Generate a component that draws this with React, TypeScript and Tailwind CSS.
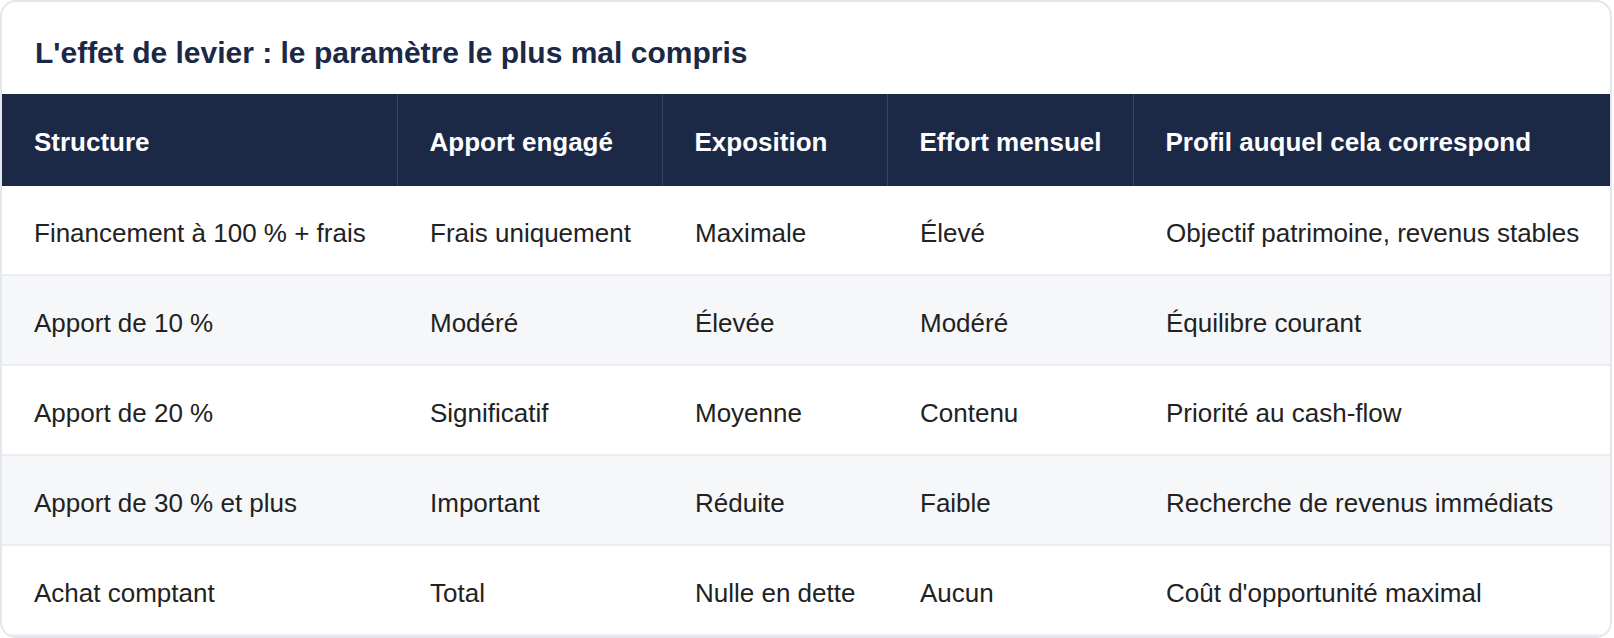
import React from "react";

const rows: string[][] = [
  ["Financement à 100 % + frais", "Frais uniquement", "Maximale", "Élevé", "Objectif patrimoine, revenus stables"],
  ["Apport de 10 %", "Modéré", "Élevée", "Modéré", "Équilibre courant"],
  ["Apport de 20 %", "Significatif", "Moyenne", "Contenu", "Priorité au cash-flow"],
  ["Apport de 30 % et plus", "Important", "Réduite", "Faible", "Recherche de revenus immédiats"],
  ["Achat comptant", "Total", "Nulle en dette", "Aucun", "Coût d'opportunité maximal"],
];

const headers = ["Structure", "Apport engagé", "Exposition", "Effort mensuel", "Profil auquel cela correspond"];

export default function App() {
  return (
    <div
      className="w-[1614px] h-[638px] bg-white"
      style={{ fontFamily: '"Liberation Sans", Arial, Helvetica, sans-serif' }}
    >
      <div className="w-[1612px] h-[638px] border-2 border-[#e3e6ea] rounded-[16px] overflow-hidden bg-white">
        <h2 className="pl-[33px] pt-[33px] pb-[23px] text-[30px] leading-[36px] font-bold text-[#1b2846]">
          L'effet de levier : le paramètre le plus mal compris
        </h2>
        <table className="w-[1608px] table-fixed border-collapse">
          <colgroup>
            <col className="w-[395px]" />
            <col className="w-[265px]" />
            <col className="w-[225px]" />
            <col className="w-[246px]" />
            <col className="w-[477px]" />
          </colgroup>
          <thead>
            <tr className="bg-[#1b2846]">
              {headers.map((h, i) => (
                <th
                  key={h}
                  className={`text-left font-bold text-white text-[26px] leading-[40px] pt-[28px] pb-[24px] pl-[32px] pr-0 whitespace-nowrap ${
                    i > 0 ? "border-l border-[#3a4562]" : ""
                  }`}
                >
                  {h}
                </th>
              ))}
            </tr>
          </thead>
          <tbody>
            {rows.map((r, ri) => (
              <tr
                key={ri}
                className={`${ri % 2 === 1 ? "bg-[#f6f7f9]" : "bg-white"} border-b-2 border-[#eceef2]`}
              >
                {r.map((c, ci) => (
                  <td
                    key={ci}
                    className={`text-[#222222] text-[26px] leading-[40px] pt-[27px] pb-[21px] pr-0 whitespace-nowrap ${
                      ci > 0 ? "pl-[33px]" : "pl-[32px]"
                    }`}
                  >
                    {c}
                  </td>
                ))}
              </tr>
            ))}
          </tbody>
        </table>
      </div>
    </div>
  );
}
